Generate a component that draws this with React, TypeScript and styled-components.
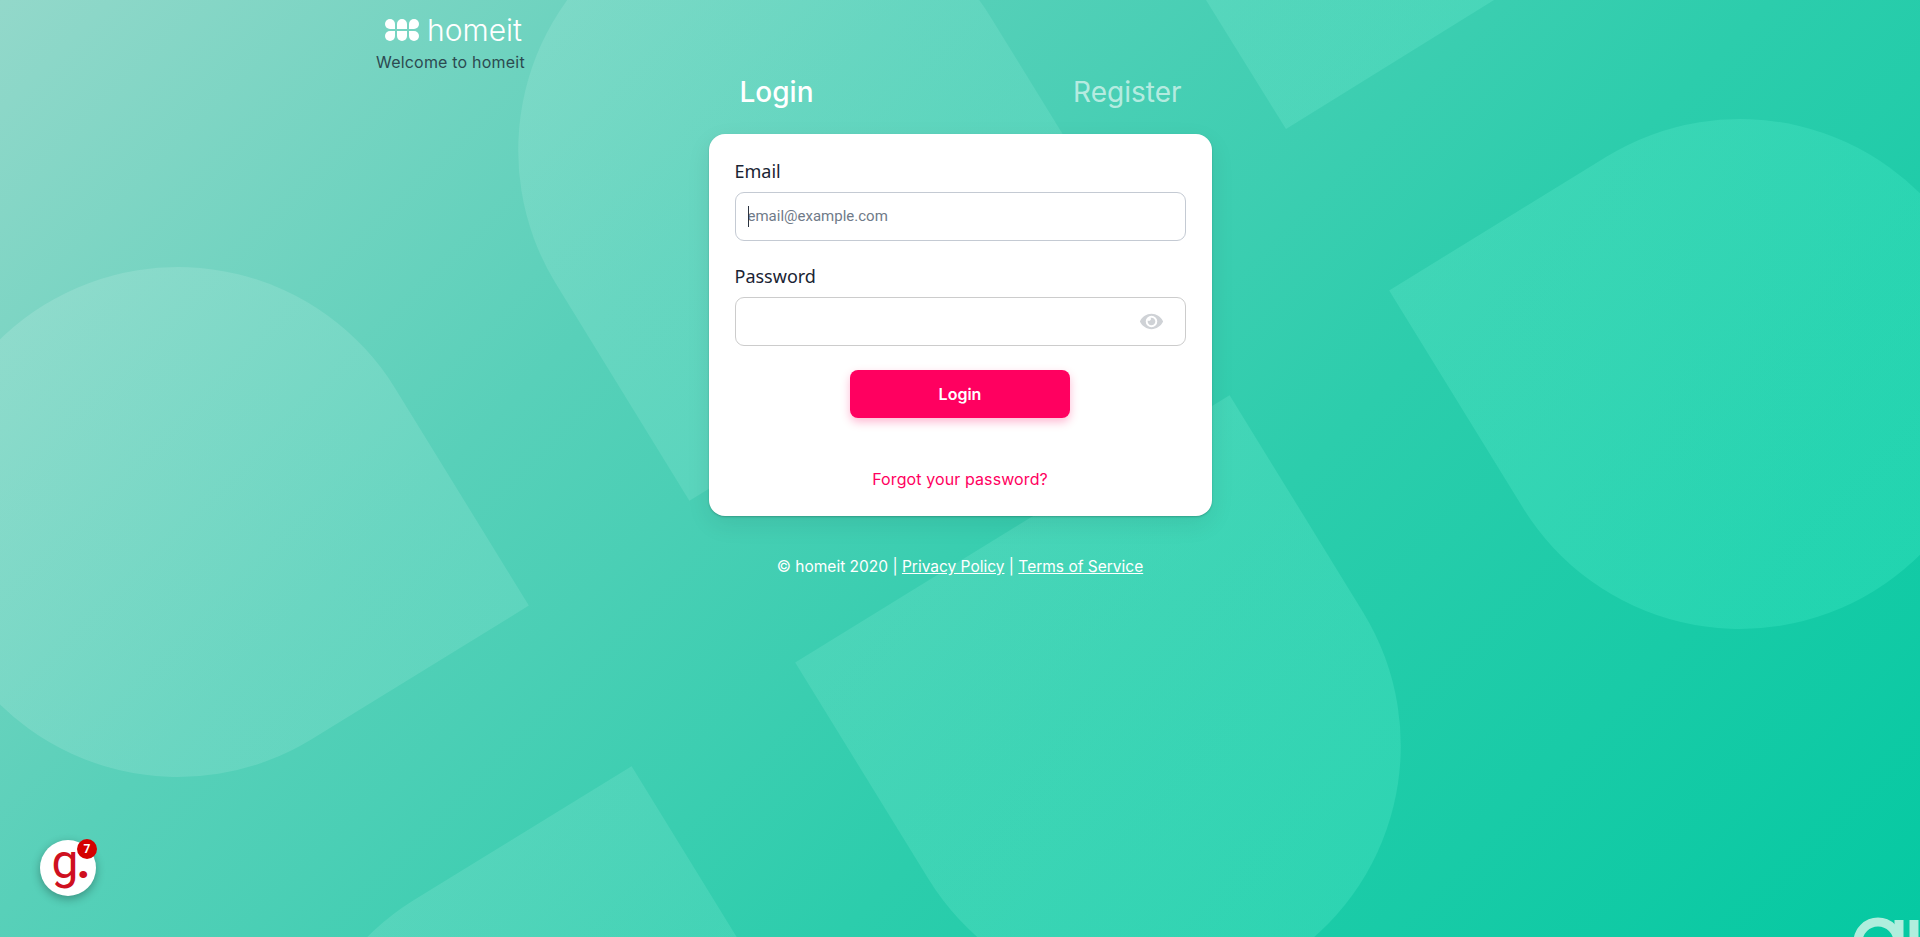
import React from 'react';
import styled, { createGlobalStyle } from 'styled-components';
import { FaEye } from 'react-icons/fa';

const GlobalStyle = createGlobalStyle`
  html, body {
    margin: 0;
    padding: 0;
    height: 100%;
  }
  body {
    font-family: 'Inter', 'Lato', sans-serif;
  }
`;

const Page = styled.div`
  position: relative;
  width: 100%;
  height: 937px;
  overflow: hidden;
  background: linear-gradient(135deg, #93d8ca 0%, #58d0b9 32%, #2ccdac 62%, #05c9a2 100%);
`;

const Backdrop = styled.svg`
  position: absolute;
  inset: 0;
  width: 100%;
  height: 100%;
`;

const Content = styled.div`
  position: relative;
  display: flex;
  flex-direction: column;
`;

const Brand = styled.header`
  display: flex;
  flex-direction: column;
  width: 150px;
  height: 77px;
  margin-left: 376px;
  padding-top: 12px;
  box-sizing: border-box;
`;

const BrandRow = styled.div`
  display: flex;
  align-items: center;
  gap: 7px;
  height: 36px;
  margin-left: 8px;
`;

const BrandName = styled.span`
  font-size: 30px;
  font-weight: 300;
  color: #ffffff;
`;

const Welcome = styled.span`
  margin-top: 4px;
  font-size: 16px;
  color: #2c4a50;
  letter-spacing: 0.2px;
  white-space: nowrap;
`;

const Tabs = styled.nav`
  display: flex;
  align-items: center;
  justify-content: space-between;
  width: 503px;
  height: 30px;
  margin: 0 auto 27px;
  padding: 0 30px 0 31px;
  box-sizing: border-box;
`;

const Tab = styled.span<{ $active?: boolean }>`
  font-size: 28px;
  font-weight: ${(p) => (p.$active ? 500 : 400)};
  color: ${(p) => (p.$active ? '#ffffff' : 'rgba(255, 255, 255, 0.62)')};
`;

const Card = styled.form`
  display: flex;
  flex-direction: column;
  width: 503px;
  height: 382px;
  margin: 0 auto;
  padding: 25px 26px 0;
  box-sizing: border-box;
  background: #ffffff;
  border-radius: 16px;
  box-shadow: 0 8px 24px rgba(0, 0, 0, 0.08), 0 1px 2px rgba(0, 0, 0, 0.2);
`;

const Label = styled.label`
  height: 24px;
  margin-bottom: 9px;
  font-family: 'Noto Sans', sans-serif;
  font-size: 18px;
  line-height: 24px;
  color: #1a2433;
`;

const Field = styled.div`
  position: relative;
  margin-bottom: 23px;
`;

const Input = styled.input<{ $focused?: boolean }>`
  display: block;
  width: 100%;
  height: 49px;
  padding: 0 12px 2px;
  box-sizing: border-box;
  border: 1px solid ${(p) => (p.$focused ? '#c4cad3' : '#cccccc')};
  border-radius: 9px;
  outline: none;
  background: #ffffff;
  font-family: 'Roboto', sans-serif;
  font-size: 15px;
  color: #2b3340;

  &::placeholder {
    color: #6f7a88;
    opacity: 1;
  }
`;

const Caret = styled.span`
  position: absolute;
  left: 13px;
  top: 14px;
  width: 1px;
  height: 21px;
  background: #2b3340;
`;

const EyeButton = styled.span`
  position: absolute;
  right: 23px;
  top: 0;
  display: flex;
  align-items: center;
  height: 49px;
  color: #cfd2d6;
  font-size: 23px;
`;

const Submit = styled.button`
  align-self: center;
  width: 220px;
  height: 48px;
  margin-top: 1px;
  border: 0;
  border-radius: 8px;
  background: #ff0060;
  box-shadow: 0 4px 10px rgba(255, 0, 96, 0.28);
  color: #ffffff;
  font-family: inherit;
  font-size: 16px;
  font-weight: 600;
`;

const Forgot = styled.a`
  align-self: center;
  margin-top: 51px;
  font-size: 16px;
  letter-spacing: 0.1px;
  color: #ff0060;
`;

const Footer = styled.footer`
  margin-top: 40px;
  text-align: center;
  font-size: 15.5px;
  line-height: 22px;
  color: #ffffff;
`;

const FooterLink = styled.a`
  color: #ffffff;
  text-decoration: underline;
`;

const Widget = styled.div`
  position: absolute;
  left: 40px;
  top: 840px;
  display: flex;
  align-items: center;
  justify-content: center;
  width: 56px;
  height: 56px;
  border-radius: 50%;
  background: #ffffff;
  box-shadow: 0 3px 10px rgba(0, 0, 0, 0.3);
  font-family: 'Roboto', sans-serif;
  font-size: 48px;
  line-height: 56px;
  color: #cf1020;
`;

const WidgetGlyph = styled.span`
  position: relative;
  top: -6px;
  left: 2px;
  letter-spacing: -2px;
`;

const WidgetDot = styled.span`
  font-weight: 700;
`;

const Badge = styled.span`
  position: absolute;
  top: -1px;
  right: -1px;
  width: 20px;
  height: 20px;
  border-radius: 50%;
  background: #d40000;
  color: #ffffff;
  font-size: 12px;
  font-weight: 700;
  line-height: 20px;
  text-align: center;
`;

const THETA = (58.4 * Math.PI) / 180;
const ux = Math.cos(THETA);
const uy = Math.sin(THETA);
const nx = uy;
const ny = -ux;
const R = 255;

// petal: a circle on one end, square corners on the others
const pt = (cx: number, cy: number, a: number, b: number) =>
  `${(cx + R * (a * nx + b * ux)).toFixed(1)} ${(cy + R * (a * ny + b * uy)).toFixed(1)}`;

const Backgrounds = () => (
  <Backdrop viewBox="0 0 1920 937" preserveAspectRatio="none">
    <defs>
      <linearGradient id="petal" gradientUnits="userSpaceOnUse" x1="0" y1="200" x2="1700" y2="800">
        <stop offset="0" stopColor="#ffffff" stopOpacity="0.14" />
        <stop offset="0.5" stopColor="#b8ffee" stopOpacity="0.13" />
        <stop offset="1" stopColor="#4cf0cc" stopOpacity="0.26" />
      </linearGradient>
    </defs>
    {/* left teardrop */}
    <path fill="url(#petal)" d={`M${pt(178, 522, 1, 0)} L${pt(178, 522, 1, 1)} L${pt(178, 522, 0, 1)} A${R} ${R} 0 1 1 ${pt(178, 522, 1, 0)}Z`} />
    {/* top centre */}
    <path fill="url(#petal)" d={`M${pt(773, 150, -1, 0)} L${pt(773, 150, -1, 1)} L${pt(773, 150, 1, 1)} L${pt(773, 150, 1, 0)} A${R} ${R} 0 0 0 ${pt(773, 150, -1, 0)}Z`} />
    {/* top right sliver */}
    <path fill="url(#petal)" d="M1206 0L1286 129L1494 0Z" />
    {/* right teardrop */}
    <path fill="url(#petal)" d={`M${pt(1740, 374, -1, 0)} L${pt(1740, 374, -1, -1)} L${pt(1740, 374, 0, -1)} A${R} ${R} 0 1 1 ${pt(1740, 374, -1, 0)}Z`} />
    {/* bottom centre */}
    <path fill="url(#petal)" d={`M${pt(1146, 746, -1, 0)} L${pt(1146, 746, -1, -1)} L${pt(1146, 746, 1, -1)} L${pt(1146, 746, 1, 0)} A${R} ${R} 0 0 1 ${pt(1146, 746, -1, 0)}Z`} />
    {/* bottom left */}
    <path fill="url(#petal)" d={`M${pt(548, 1117, 0, -1)} L${pt(548, 1117, 1, -1)} L${pt(548, 1117, 1, 0)} A${R} ${R} 0 1 1 ${pt(548, 1117, 0, -1)}Z`} />
    {/* logo peeking out bottom right */}
    <circle cx="1878" cy="942" r="20" fill="none" stroke="#b0eedd" strokeWidth="9" />
    <path d="M1899 920V937M1914 920V937" stroke="#b0eedd" strokeWidth="9" fill="none" />
  </Backdrop>
);

const BrandMark = () => (
  <svg width="36" height="24" viewBox="0 0 36 24" fill="#ffffff">
    <path d="M1 6a5 5 0 0 1 10 0v5H6a5 5 0 0 1-5-5Z" />
    <path d="M1 18a5 5 0 0 0 10 0v-5H6a5 5 0 0 0-5 5Z" />
    <path d="M13 6a5 5 0 0 1 10 0v5H13Z" />
    <path d="M13 18a5 5 0 0 0 10 0v-5H13Z" />
    <path d="M25 6a5 5 0 0 1 10 0 5 5 0 0 1-5 5h-5Z" />
    <path d="M25 18a5 5 0 0 0 10 0 5 5 0 0 0-5-5h-5Z" />
  </svg>
);

const App: React.FC = () => (
  <Page>
    <GlobalStyle />
    <Backgrounds />
    <Content>
      <Brand>
        <BrandRow>
          <BrandMark />
          <BrandName>homeit</BrandName>
        </BrandRow>
        <Welcome>Welcome to homeit</Welcome>
      </Brand>
      <Tabs>
        <Tab $active>Login</Tab>
        <Tab>Register</Tab>
      </Tabs>
      <Card onSubmit={(e) => e.preventDefault()}>
        <Label>Email</Label>
        <Field>
          <Input $focused placeholder="email@example.com" />
          <Caret />
        </Field>
        <Label>Password</Label>
        <Field>
          <Input type="password" />
          <EyeButton>
            <FaEye />
          </EyeButton>
        </Field>
        <Submit type="button">Login</Submit>
        <Forgot>Forgot your password?</Forgot>
      </Card>
      <Footer>
        © homeit 2020 | <FooterLink>Privacy Policy</FooterLink> | <FooterLink>Terms of Service</FooterLink>
      </Footer>
    </Content>
    <Widget>
      <WidgetGlyph>
        g<WidgetDot>.</WidgetDot>
      </WidgetGlyph>
      <Badge>7</Badge>
    </Widget>
  </Page>
);

export default App;
